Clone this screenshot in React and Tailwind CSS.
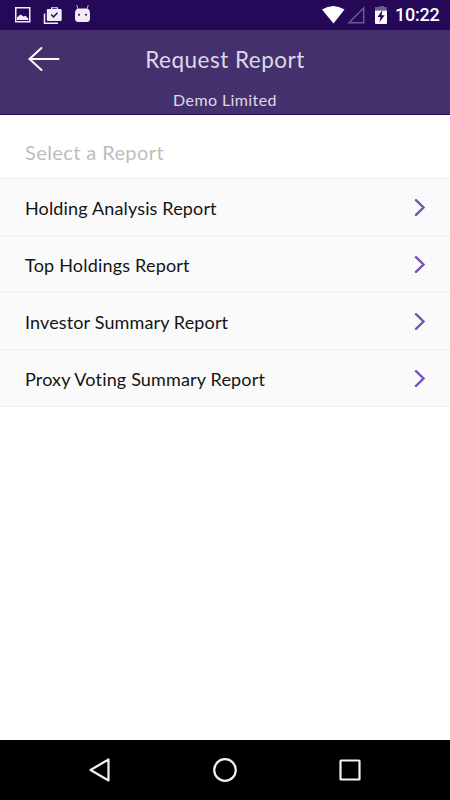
import React from 'react';

const reports = [
  { id: 1, title: 'Holding Analysis Report', tracking: 'tracking-[0.15px]' },
  { id: 2, title: 'Top Holdings Report', tracking: 'tracking-[0.2px]' },
  { id: 3, title: 'Investor Summary Report', tracking: 'tracking-[0.13px]' },
  { id: 4, title: 'Proxy Voting Summary Report', tracking: 'tracking-[0.16px]' },
];

function StatusBar() {
  return (
    <div className="flex h-[30px] shrink-0 items-center bg-[#260859] pl-[14px] pr-[10px] text-white">
      {/* notifications */}
      <svg width="80" height="30" viewBox="0 0 80 30">
        <path fillRule="evenodd" fill="#f1edf6" d="M1 7h15.500v15.500h-15.500zM2.500 8.500v12.500h12.500v-12.500z" />
        <path fill="#f1edf6" d="M3 20v-2.500l3.500-3 3 2 2-.7 2.800 2.700v1.500z" />
        <path fill="none" stroke="#f1edf6" strokeWidth="1.500" d="M30.500 13.500v9.700h13.500" />
        <path fillRule="evenodd" fill="#f1edf6" d="M34 9h3V7.300h7V9h2.500q1.200 0 1.200 1.200v9.600q0 1.200-1.200 1.200H34q-1.200 0-1.200-1.200v-9.600Q32.800 9 34 9zM38.300 9h4.500v-.7h-4.500z" />
        <path fill="none" stroke="#260859" strokeWidth="1.500" d="M37.300 14.500l2.200 2.500 4-4.300" />
        <path fill="none" stroke="#b9aacb" strokeWidth="1" d="M64 9l-1.300-4M73 9l1.300-4" />
        <path fill="#f1edf6" d="M61 13.500Q61 8.500 65 8.500h7Q76 8.500 76 13.500v5q0 3.500-3.500 3.500h-8Q61 22 61 18.500z" />
        <circle cx="65" cy="14.700" r="1" fill="#260859" />
        <circle cx="72" cy="14.700" r="1" fill="#260859" />
      </svg>
      {/* wifi, signal, battery */}
      <svg className="ml-auto" width="70" height="30" viewBox="0 0 70 30">
        <path fill="#fff" d="M1 9.500Q12.200 2.500 23.500 9.500L12.500 23.500z" />
        <path fill="none" stroke="#6d5a90" strokeWidth="1.500" d="M42.700 8v14.700H28z" />
        <path fill="#6d5a90" d="M56 7h2.500V6h4.500v1h2.700v3.500H54V7z" />
        <path fill="#fff" d="M54 10.500h12v12.500q0 1-1 1H55q-1 0-1-1z" />
        <path fill="#260859" d="M61.500 10l-5 7h3l-1.300 5.500 5.500-7.200h-3.200z" />
      </svg>
      <span className="ml-[4px] w-[45px] whitespace-nowrap font-['Roboto',sans-serif] text-[18px] leading-[30px] font-medium tracking-[-0.25px]">10:22</span>
    </div>
  );
}

function Header() {
  return (
    <header className="grid h-[85px] shrink-0 grid-cols-[72px_1fr_72px] grid-rows-[57px_28px] border-b border-[#260859] bg-[#45306e] text-center text-[#ded8e6]">
      <button className="flex items-center justify-end pr-[12px]">
        <svg width="34" height="30" viewBox="0 0 34 30" fill="none" stroke="#fff" strokeWidth="2" strokeLinecap="round">
          <path d="M3.500 15h29M15.500 4L3.500 15l12 11" />
        </svg>
      </button>
      <h1 className="text-[22.500px] leading-[60px] tracking-[0.5px]">Request Report</h1>
      <p className="col-start-2 text-[16px] leading-[25px] tracking-[0.4px]">Demo Limited</p>
    </header>
  );
}

function ReportRow({ report }) {
  return (
    <li className="flex h-[57px] items-center justify-between border-b border-[#f0f0f0] bg-[#fafafa] pl-[25px] pr-[24px]">
      <span className={`pt-[2px] text-[18px] text-[#141414] ${report.tracking}`}>{report.title}</span>
      <svg width="12" height="18" viewBox="0 0 12 18" fill="none" stroke="#7554b8" strokeWidth="2.400" strokeLinecap="round">
        <path d="M2 2.200l7.500 7.300L2 16.800" />
      </svg>
    </li>
  );
}

function NavigationBar() {
  return (
    <nav className="grid h-[60px] shrink-0 grid-cols-3 bg-black px-[37.500px]">
      {['back', 'home', 'recent'].map(key => (
        <div key={key} className="flex items-center justify-center">
          <svg width="26" height="26" viewBox="0 0 26 26" fill="none" stroke="#f2f2f2" strokeWidth="2.200" strokeLinejoin="round">
            {key === 'back' && <path d="M21.500 2.500v21L3.500 13z" />}
            {key === 'home' && <circle cx="13" cy="13" r="10.800" />}
            {key === 'recent' && <rect x="3.500" y="3.500" width="19" height="19" rx="0.500" />}
          </svg>
        </div>
      ))}
    </nav>
  );
}

export default function App() {
  return (
    <div className="flex h-screen w-full flex-col overflow-hidden bg-white font-['Lato',sans-serif]">
      <StatusBar />
      <Header />
      <main className="flex-1">
        <h2 className="h-[64px] border-b border-[#f0f0f0] pl-[25px] text-[20px] leading-[75px] tracking-[0.4px] text-[#bdbdbd]">Select a Report</h2>
        <ul>
          {reports.map(report => <ReportRow key={report.id} report={report} />)}
        </ul>
      </main>
      <NavigationBar />
    </div>
  );
}
